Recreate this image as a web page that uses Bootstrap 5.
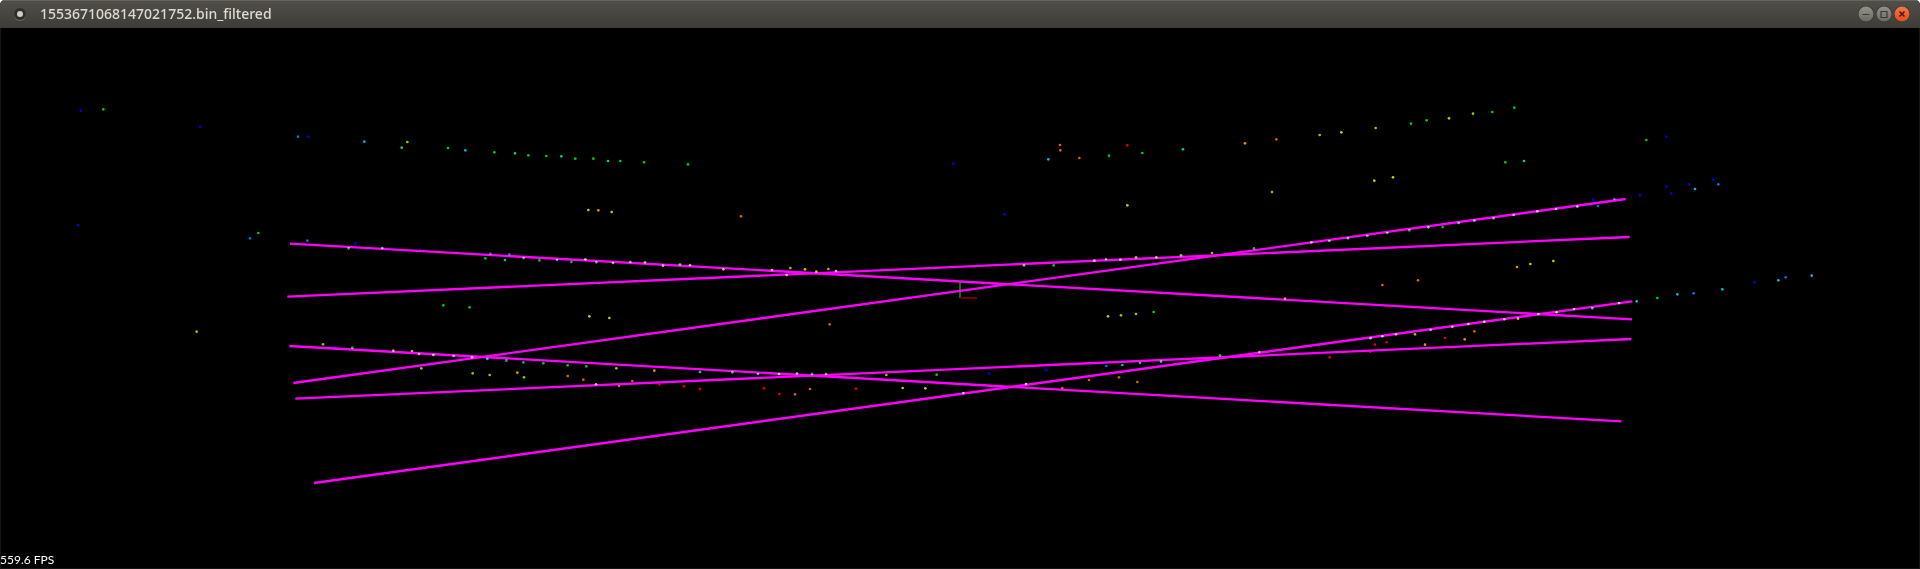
<!DOCTYPE html>
<html lang="en">
<head>
<meta charset="utf-8">
<meta name="viewport" content="width=device-width, initial-scale=1">
<title>1553671068147021752.bin_filtered</title>
<link rel="stylesheet" href="https://cdn.jsdelivr.net/npm/bootstrap@5.3.0/dist/css/bootstrap.min.css">
<style>
  body { background: #fff; }
  .app-window { background: #000; border-radius: 5px 5px 0 0; overflow: hidden; }
  .title-strip {
    height: 28px;
    padding: 0 10px 0 13px;
    background: linear-gradient(#504f4a, #3d3c38);
    box-shadow: inset 0 1px #65645e;
  }
  .title-strip h1 {
    font: 500 14px/20px "Noto Sans", sans-serif;
    color: #dfdbd2;
    margin-left: 13px;
    padding-bottom: 1px;
  }
  .win-btn { width: 16px; height: 16px; padding: 0; border: 0; background: none; line-height: 0; }
  .viewport { box-shadow: inset 1px -1px #141414, inset -1px 0 #141414; }
  .scene { min-height: 0; }
  .scene line { stroke: #f0f; stroke-width: 7; stroke-linecap: butt; }
  .scene circle { mix-blend-mode: screen; }
  .fps { left: 0; bottom: 0; font: 400 12px/18px Lato, sans-serif; color: #fff; }
</style>
</head>
<body>
<main class="app-window d-flex flex-column vh-100">
  <header class="title-strip d-flex align-items-center flex-shrink-0">
    <svg width="14" height="14" viewBox="0 0 14 14" aria-hidden="true">
      <circle cx="7" cy="8" r="6" fill="#6b6a64"/><circle cx="7" cy="7" r="6" fill="#302f2c"/><circle cx="7" cy="7" r="3" fill="#d2cec6"/>
    </svg>
    <h1 class="mb-0 text-truncate">1553671068147021752.bin_filtered</h1>
    <div class="d-flex ms-auto" style="gap:2px">
      <button class="win-btn" type="button" aria-label="Minimize">
        <svg width="16" height="16" viewBox="0 0 16 16"><circle cx="8" cy="8" r="8" fill="#33322e"/><circle cx="8" cy="8" r="7.5" fill="url(#grey)"/><path d="M4.5 8.5h7" stroke="#3b3a36" stroke-width="1.2"/></svg>
      </button>
      <button class="win-btn" type="button" aria-label="Maximize">
        <svg width="16" height="16" viewBox="0 0 16 16"><circle cx="8" cy="8" r="8" fill="#33322e"/><circle cx="8" cy="8" r="7.5" fill="url(#grey)"/><path d="M5 5.5h6v6h-6z" fill="none" stroke="#3b3a36" stroke-width="1.2"/></svg>
      </button>
      <button class="win-btn" type="button" aria-label="Close">
        <svg width="16" height="16" viewBox="0 0 16 16"><circle cx="8" cy="8" r="8" fill="#33322e"/><circle cx="8" cy="8" r="7.5" fill="url(#red)"/><path d="M5.5 5.5l5 5m0-5l-5 5" stroke="#3f1d10" stroke-width="1.5"/></svg>
      </button>
    </div>
    <svg width="0" height="0" class="position-absolute" aria-hidden="true">
      <defs>
        <linearGradient id="grey" x2="0" y2="1"><stop stop-color="#94938b"/><stop offset="1" stop-color="#6b6a63"/></linearGradient>
        <linearGradient id="red" x2="0" y2="1"><stop stop-color="#f5784f"/><stop offset="1" stop-color="#e64a15"/></linearGradient>
      </defs>
    </svg>
  </header>

  <section class="viewport position-relative d-flex flex-fill scene" aria-label="Point cloud">
    <svg id="cloud" class="w-100 h-100" viewBox="0 84 5760 1623" preserveAspectRatio="xMidYMid meet" role="img" aria-label="Filtered points with fitted lines">
      <path d="M2880 844v50" stroke="#007c00" stroke-width="6"/>
      <path d="M2880 894h51" stroke="#700000" stroke-width="6"/>
      <line x1="870" y1="731" x2="4896" y2="958"/>
      <line x1="862" y1="890" x2="4889" y2="711"/>
      <line x1="880" y1="1149" x2="4877" y2="597"/>
      <line x1="868" y1="1038" x2="4864" y2="1264"/>
      <line x1="886" y1="1196" x2="4894" y2="1017"/>
      <line x1="942" y1="1449" x2="4897" y2="904"/>
    </svg>
    <output class="fps position-absolute">559.6 FPS</output>
  </section>
</main>
<script src="https://cdn.jsdelivr.net/npm/bootstrap@5.3.0/dist/js/bootstrap.bundle.min.js"></script>
<script>
  // Intensity ramp, from weak (blue) to strong (red) returns.
  const ramp = { b: '#0000e8', a: '#0078d8', c: '#00bcd8', t: '#00cc94', g: '#00cc18', l: '#8ccc00',
                 y: '#d2c800', o: '#dc9a00', r: '#e06000', s: '#e00000' };
  // Each scan patch has an origin; its points are "colour x y" relative to it.
  const patches = [
    [180, 270, 'b 62 62,g 130 58,b 421 110,a 714 140,b 745 140,c 913 155,t 1025 173,l 1042 156,g 1164 174,c 1216 181,g 1303 187,t 1365 190,g 1405 196,b 54 406,a 570 445,g 595 429,a 742 452,b 887 460,g 866 475,t 967 474,b 1080 480,a 1291 491,a 1348 493,g 1276 505,t 1335 510,t 1391 504'],
    [1320, 390, 'g 24 54,c 76 61,g 163 67,t 225 70,g 265 76,g 319 78,t 364 79,g 406 86,g 460 86,t 504 93,g 541 93,g 612 97,g 744 103,y 445 240,o 475 241,y 515 246,r 903 259,g 298 391,t 252 384,t 351 390,g 394 396,l 436 388,g 469 397,l 519 399,t 571 396,l 615 397,y 669 407,g 720 403,l 750 405,y 850 418,y 996 420,l 1051 414,y 1095 418,y 1129 425,l 1165 417,y 1188 423,l 1040 435'],
    [2580, 360, 'b 280 131,r 600 75,r 601 91,c 565 118,r 658 114,g 747 107,s 802 76,g 847 99,t 969 88,o 1155 70,r 1249 58,b 433 283,y 802 256,o 1236 216,l 492 436,g 581 436,l 703 422,g 738 417,l 781 419,l 828 412,y 889 412,l 963 406,l 1056 399,g 1182 385,o 1275 536,y 744 589,l 783 586,l 828 582,g 881 576'],
    [3720, 270, 'l 239 135,y 304 127,l 407 114,g 513 101,g 560 91,y 627 85,l 699 71,g 757 66,g 823 53,g 796 217,t 852 213,y 403 272,y 459 262,b 1060 329,a 1074 348,g 214 457,g 268 453,g 324 445,g 382 438,g 442 429,g 508 421,t 565 412,g 608 411,c 656 399,c 703 392,g 761 385,c 821 375,t 892 364,t 948 357,t 1012 350,o 831 531,y 871 522,y 940 513,r 427 585,r 534 571'],
    [4680, 360, 'g 259 60,b 319 50,b 240 226,b 319 200,b 334 220,b 387 193,c 405 207,b 459 179,a 475 193,a 163 237,c 230 544,g 292 534,c 352 523,a 401 520,c 487 508,b 583 487,c 655 481,a 677 472,c 755 467,c 97 565,g 177 549,g 42 567'],
    [540, 840, 'l 50 155,g 790 76,g 869 82,l 429 193,b 465 202,g 517 203,l 640 212,l 696 213,g 717 222,l 760 225,g 821 228,l 876 232,c 922 237,g 979 242,g 1030 247,g 1090 250,l 724 265,l 878 280,l 929 285,o 1012 278,l 1032 292'],
    [1680, 900, 'y 88 49,y 148 54,r 809 73,g 23 196,g 79 199,l 169 205,o 283 212,t 420 216,g 517 217,t 594 222,l 657 222,g 711 220,c 756 222,l 798 222,r 23 228,r 70 239,y 108 253,r 177 258,r 217 243,s 298 253,s 372 259,s 420 267,s 612 265,s 658 282,r 705 283,r 750 267,s 888 266,l 979 225,g 1130 224,y 1028 264,y 1096 265,g 1210 279'],
    [2880, 870, 'b 87 251,b 259 241,y 198 282,r 307 294,r 387 270,a 439 228,t 487 225,g 540 219,c 603 215,r 477 262,r 532 276,g 780 196,g 898 186'],
    [3780, 750, 's 209 322,s 331 305,s 345 284,s 380 277,g 332 265,l 367 259,l 408 253,l 465 253,o 495 284,g 512 240,s 555 264,g 577 231,o 614 268,r 643 244,g 625 222,g 673 215,g 733 208,l 774 206,t 835 192,g 890 187,g 942 178']
  ];
  const cloud = document.getElementById('cloud');
  const seen = new Set();
  for (const [ox, oy, list] of patches) {
    for (const item of list.split(',')) {
      const [tone, dx, dy] = item.split(' ');
      const x = ox + Number(dx), y = oy + Number(dy);
      // Neighbouring patches overlap; keep one copy of a shared point.
      const key = Math.round(x / 6) + ':' + Math.round(y / 6);
      if (seen.has(key)) continue;
      seen.add(key);
      const dot = document.createElementNS('http://www.w3.org/2000/svg', 'circle');
      dot.setAttribute('cx', x);
      dot.setAttribute('cy', y);
      dot.setAttribute('r', 4);
      dot.setAttribute('fill', ramp[tone]);
      cloud.append(dot);
    }
  }
</script>
</body>
</html>
